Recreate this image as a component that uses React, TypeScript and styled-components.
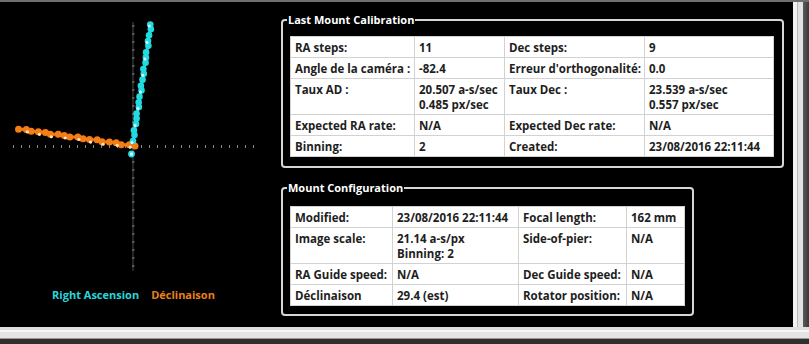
import styled, { createGlobalStyle } from 'styled-components';

const GlobalStyle = createGlobalStyle`
    html, body {
        margin: 0;
        padding: 0;
        background: #2a2a2a;
    }
    * {
        box-sizing: border-box;
    }
`;

const Window = styled.div`
    width: 809px;
    height: 344px;
    display: flex;
    flex-direction: column;
    background: #3a3a3a;
    font-family: "Open Sans", "Noto Sans", sans-serif;
    overflow: hidden;
`;

const TopEdge = styled.div`
    height: 2px;
    background: #6e6e6e;
`;

const Body = styled.div`
    display: flex;
    height: 325px;
`;

const Screen = styled.div`
    width: 793px;
    background: #000;
    display: flex;
`;

const RightFrame = styled.div`
    flex: 1;
    background: linear-gradient(to right, #f2f2f2 0, #f2f2f2 4px, #b8b8b8 4px, #b8b8b8 5px, #e2e2e2 5px, #e2e2e2 10px, #5a5a5a 10px, #3a3a3a 100%);
`;

const BottomFrame = styled.div`
    flex: 1;
    background: linear-gradient(to bottom, #dedede 0, #dedede 3px, #f6f6f6 3px, #f6f6f6 5px, #e4e4e4 5px, #e4e4e4 11px, #9a9a9a 11px, #9a9a9a 12px, #303030 12px);
`;

const ChartPane = styled.div`
    width: 267px;
    display: flex;
    flex-direction: column;
`;

const Legend = styled.div`
    display: flex;
    justify-content: center;
    gap: 12px;
    font-size: 11px;
    font-weight: 700;
    line-height: 16px;
`;

const LegendItem = styled.span<{ $color: string }>`
    color: ${p => p.$color};
`;

const Side = styled.div`
    margin-left: 14px;
    padding-top: 10px;
    display: flex;
    flex-direction: column;
    align-items: flex-start;
    gap: 12px;
`;

const Group = styled.fieldset<{ $pt: number; $pr: number; $pb: number }>`
    margin: 0;
    border: 2px solid #d6d6d6;
    border-radius: 4px;
    padding: ${p => p.$pt}px ${p => p.$pr}px ${p => p.$pb}px 7px;
`;

const GroupTitle = styled.legend`
    color: #fff;
    font-size: 11px;
    font-weight: 700;
    line-height: 16px;
    padding: 0 1px;
    margin-left: -3px;
`;

const Table = styled.table`
    border-collapse: collapse;
    table-layout: fixed;
    background: #fff;
    border: 1px solid #b8b8b8;
`;

const Col = styled.col<{ $w: number }>`
    width: ${p => p.$w}px;
`;

const Cell = styled.td`
    border: 1px solid #d2d2d2;
    padding: 3px 3px 2px 4px;
    vertical-align: top;
    color: #1e1e1e;
    font-size: 11.5px;
    font-weight: 700;
    line-height: 15px;
    white-space: nowrap;
    overflow: hidden;
`;

type Row = [string, string, string, string];

const calibration: Row[] = [
    ['RA steps:', '11', 'Dec steps:', '9'],
    ['Angle de la caméra :', '-82.4', "Erreur d'orthogonalité:", '0.0'],
    ['Taux AD :', '20.507 a-s/sec\n0.485 px/sec', 'Taux Dec :', '23.539 a-s/sec\n0.557 px/sec'],
    ['Expected RA rate:', 'N/A', 'Expected Dec rate:', 'N/A'],
    ['Binning:', '2', 'Created:', '23/08/2016 22:11:44'],
];

const configuration: Row[] = [
    ['Modified:', '23/08/2016 22:11:44', 'Focal length:', '162 mm'],
    ['Image scale:', '21.14 a-s/px\nBinning: 2', 'Side-of-pier:', 'N/A'],
    ['RA Guide speed:', 'N/A', 'Dec Guide speed:', 'N/A'],
    ['Déclinaison', '29.4 (est)', 'Rotator position:', 'N/A'],
];

const InfoTable = ({ cols, rows }: { cols: number[]; rows: Row[] }) => (
    <Table>
        <colgroup>
            {cols.map((w, i) => <Col key={i} $w={w} />)}
        </colgroup>
        <tbody>
            {rows.map((row, r) => (
                <tr key={r}>
                    {row.map((text, c) => (
                        <Cell key={c}>
                            {text.split('\n').map((line, l) => <div key={l}>{line}</div>)}
                        </Cell>
                    ))}
                </tr>
            ))}
        </tbody>
    </Table>
);

// points in page coordinates
const line = (x0: number, y0: number, x1: number, y1: number, n: number, jitter: number) =>
    Array.from({ length: n }, (_, i) => {
        const t = i / (n - 1);
        const j = Math.sin(i * 2.3) * jitter;
        return { x: x0 + (x1 - x0) * t + j, y: y0 + (y1 - y0) * t - j * 0.6 };
    });

const raPoints = line(133, 141, 151, 24, 22, 0.8);
const decPoints = line(135, 146, 19, 129, 19, 0.9);

const Chart = () => {
    const hTicks = Array.from({ length: 31 }, (_, i) => 13 + i * 8);
    const vTicks = Array.from({ length: 31 }, (_, i) => 26 + i * 8);
    return (
        <svg width="267" height="285" viewBox="0 2 267 285">
            <line x1="133" y1="22" x2="133" y2="271" stroke="#4a4a4a" strokeWidth="1" />
            {vTicks.map(y => (
                <line key={'v' + y} x1="132" y1={y} x2="134.5" y2={y} stroke="#8a8a8a" strokeWidth="1" />
            ))}
            {hTicks.map(x => (
                <line key={'h' + x} x1={x + 0.5} y1="145" x2={x + 0.5} y2="148" stroke="#8a8a8a" strokeWidth="1" />
            ))}
            <polyline points={decPoints.map(p => `${p.x},${p.y}`).join(' ')} fill="none" stroke="#f07a12" strokeWidth="3" />
            {decPoints.map((p, i) => (
                <g key={'d' + i}>
                    <circle cx={p.x} cy={p.y} r="3.5" fill="#f57d14" />
                    {i % 2 === 1 && <circle cx={p.x + 1} cy={p.y + 2.5} r="1.6" fill="#ffe6c8" />}
                </g>
            ))}
            <polyline points={raPoints.map(p => `${p.x},${p.y}`).join(' ')} fill="none" stroke="#1cd3da" strokeWidth="3" />
            {raPoints.map((p, i) => (
                <g key={'r' + i}>
                    <circle cx={p.x} cy={p.y} r="3.3" fill="#22dbe2" />
                    {i % 3 === 0 && <circle cx={p.x - 1} cy={p.y + 1.5} r="1.5" fill="#dffcff" />}
                </g>
            ))}
            <circle cx="131.5" cy="154" r="3.4" fill="#22dbe2" />
            <circle cx="131.5" cy="154" r="1.7" fill="#e8feff" />
        </svg>
    );
};

export default function App() {
    return (
        <>
            <GlobalStyle />
            <Window>
                <TopEdge />
                <Body>
                    <Screen>
                        <ChartPane>
                            <Chart />
                            <Legend>
                                <LegendItem $color="#2ad6dc">Right Ascension</LegendItem>
                                <LegendItem $color="#e8801c">Déclinaison</LegendItem>
                            </Legend>
                        </ChartPane>
                        <Side>
                            <Group $pt={8} $pr={8} $pb={9}>
                                <GroupTitle>Last Mount Calibration</GroupTitle>
                                <InfoTable cols={[124, 90, 139, 129]} rows={calibration} />
                            </Group>
                            <Group $pt={10} $pr={7} $pb={8}>
                                <GroupTitle>Mount Configuration</GroupTitle>
                                <InfoTable cols={[102, 126, 108, 58]} rows={configuration} />
                            </Group>
                        </Side>
                    </Screen>
                    <RightFrame />
                </Body>
                <BottomFrame />
            </Window>
        </>
    );
}
